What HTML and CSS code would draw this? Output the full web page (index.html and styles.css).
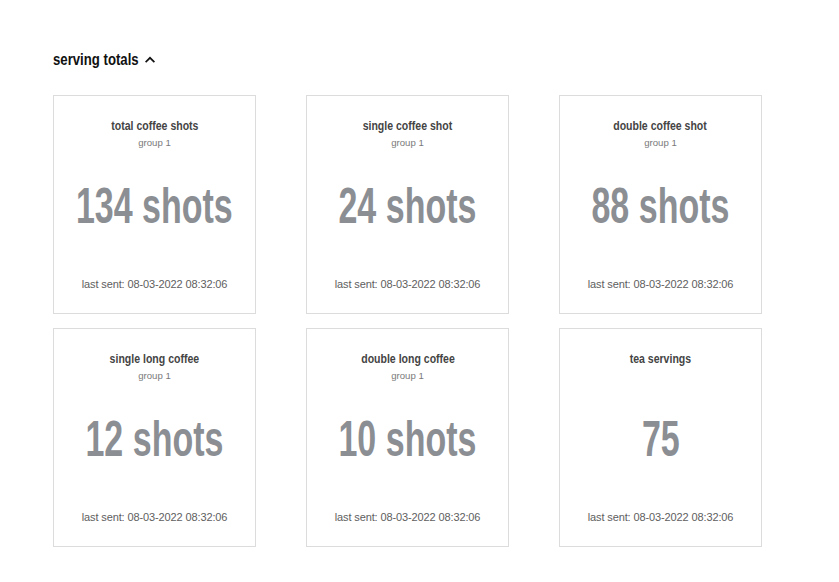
FILE: index.html
```html
<!DOCTYPE html>
<html lang="en">
<head>
<meta charset="utf-8">
<title>serving totals</title>
<link rel="stylesheet" href="styles.css">
</head>
<body>
<main class="page">
  <section class="totals">
    <h2 class="totals-heading">
      <span class="totals-label">serving totals</span>
      <svg class="chevron" width="10" height="7" viewBox="0 0 10 7" aria-hidden="true">
        <path d="M1.2 5.6 L5 1.8 L8.8 5.6" fill="none" stroke="#111" stroke-width="1.7" stroke-linecap="square"/>
      </svg>
    </h2>
    <div class="totals-grid">
      <article class="card">
        <h3 class="card-title"><span>total coffee shots</span></h3>
        <p class="card-group">group 1</p>
        <p class="card-value"><span>134 shots</span></p>
        <p class="card-sent">last sent: 08-03-2022 08:32:06</p>
      </article>
      <article class="card">
        <h3 class="card-title"><span>single coffee shot</span></h3>
        <p class="card-group">group 1</p>
        <p class="card-value"><span>24 shots</span></p>
        <p class="card-sent">last sent: 08-03-2022 08:32:06</p>
      </article>
      <article class="card">
        <h3 class="card-title"><span>double coffee shot</span></h3>
        <p class="card-group">group 1</p>
        <p class="card-value"><span>88 shots</span></p>
        <p class="card-sent">last sent: 08-03-2022 08:32:06</p>
      </article>
      <article class="card">
        <h3 class="card-title"><span>single long coffee</span></h3>
        <p class="card-group">group 1</p>
        <p class="card-value"><span>12 shots</span></p>
        <p class="card-sent">last sent: 08-03-2022 08:32:06</p>
      </article>
      <article class="card">
        <h3 class="card-title"><span>double long coffee</span></h3>
        <p class="card-group">group 1</p>
        <p class="card-value"><span>10 shots</span></p>
        <p class="card-sent">last sent: 08-03-2022 08:32:06</p>
      </article>
      <article class="card">
        <h3 class="card-title"><span>tea servings</span></h3>
        <p class="card-group"></p>
        <p class="card-value"><span>75</span></p>
        <p class="card-sent">last sent: 08-03-2022 08:32:06</p>
      </article>
    </div>
  </section>
</main>
</body>
</html>
```
FILE: styles.css
```css
html, body {
  margin: 0;
  padding: 0;
  background: #ffffff;
}

body {
  font-family: "Liberation Sans", Arial, sans-serif;
  color: #222;
}

.page {
  padding: 49px 0 0 53px;
}

/* section heading: condensed look via horizontal scaling */
.totals-heading {
  display: flex;
  align-items: center;
  margin: 0 0 25px;
  font-weight: 700;
  font-size: 17px;
  line-height: 21px;
  color: #111;
}

.totals-label {
  display: inline-block;
  width: 84px;
  white-space: nowrap;
  transform: scaleX(0.775);
  transform-origin: left center;
}

.chevron {
  display: block;
  margin-left: 8px;
  margin-top: -1px;
}

.totals-grid {
  display: grid;
  grid-template-columns: repeat(3, 203px);
  grid-auto-rows: 219px;
  column-gap: 50px;
  row-gap: 14px;
}

.card {
  box-sizing: border-box;
  border: 1px solid #dcdcdc;
  display: flex;
  flex-direction: column;
  align-items: center;
  text-align: center;
  padding: 22px 0 22px;
}

.card p,
.card h3 {
  margin: 0;
}

.card-title {
  font-weight: 700;
  font-size: 13.5px;
  line-height: 16px;
  color: #444;
  white-space: nowrap;
}

.card-title span {
  display: inline-block;
  transform: scaleX(0.78);
}

.card-group {
  margin-top: 2px !important;
  height: 14px;
  font-size: 9.6px;
  line-height: 14px;
  color: #7a7a7a;
}

.card-value {
  margin-top: 26px !important;
  height: 60px;
  font-weight: 700;
  font-size: 50px;
  line-height: 60px;
  color: #8b8e93;
  white-space: nowrap;
}

.card-value span {
  display: inline-block;
  transform: scaleX(0.68);
}

.card-sent {
  margin-top: auto !important;
  font-size: 11px;
  line-height: 14px;
  letter-spacing: -0.12px;
  color: #5e5e5e;
  white-space: nowrap;
}
```
